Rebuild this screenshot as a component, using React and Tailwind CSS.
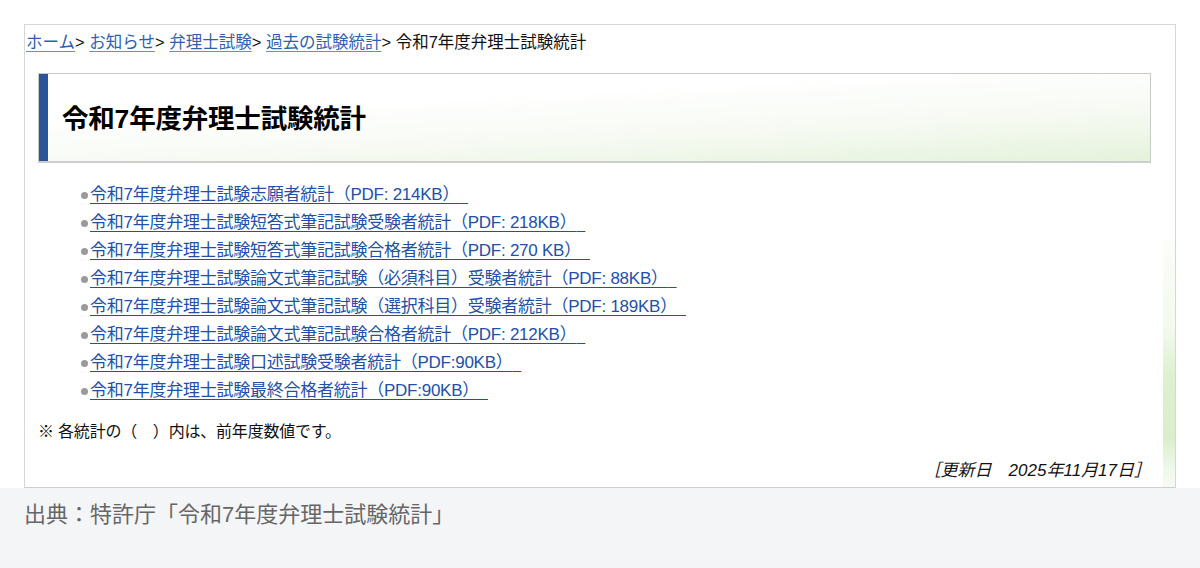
const FONT = { fontFamily: '"Liberation Sans", "Noto Sans CJK JP", sans-serif' };

const crumbs = ["ホーム", "お知らせ", "弁理士試験", "過去の試験統計"];

const files = [
  "令和7年度弁理士試験志願者統計（PDF: 214KB）",
  "令和7年度弁理士試験短答式筆記試験受験者統計（PDF: 218KB）",
  "令和7年度弁理士試験短答式筆記試験合格者統計（PDF: 270 KB）",
  "令和7年度弁理士試験論文式筆記試験（必須科目）受験者統計（PDF: 88KB）",
  "令和7年度弁理士試験論文式筆記試験（選択科目）受験者統計（PDF: 189KB）",
  "令和7年度弁理士試験論文式筆記試験合格者統計（PDF: 212KB）",
  "令和7年度弁理士試験口述試験受験者統計（PDF:90KB）",
  "令和7年度弁理士試験最終合格者統計（PDF:90KB）",
];

export default function App() {
  return (
    <div className="w-[1200px] h-[568px] bg-white flex flex-col overflow-hidden" style={FONT}>
      {/* captured page */}
      <div className="mt-6 mx-6 h-[464px] border border-[#d6d6d6] border-b-[#cfcfcf] flex text-[#111]">
        <div className="flex-1 flex flex-col pl-px">
          {/* breadcrumb */}
          <div className="pt-[5px] leading-[24px] text-[16.5px]">
            {crumbs.map((c) => (
              <span key={c}>
                <a className="text-[#2f5fae] underline underline-offset-[3px] decoration-[#6d8cc4]">{c}</a>
                <span className="text-[#111]">&gt; </span>
              </span>
            ))}
            <span>令和7年度弁理士試験統計</span>
          </div>

          {/* page heading */}
          <div className="mt-[19px] ml-3 mr-[12px] h-[90px] flex border border-[#c9c9c9] border-b-2 border-b-[#cdcdcd] bg-[linear-gradient(177deg,#ffffff_30%,#f6faf3_65%,#e5f2db_100%)]">
            <div className="w-[9px] bg-[#2a5699]" />
            <h1 className="pl-[14px] pt-[4px] flex items-center text-[26.5px] font-bold text-black tracking-[-0.2px]">
              令和7年度弁理士試験統計
            </h1>
          </div>

          {/* file list */}
          <ul className="mt-[18px] pl-[55px] flex flex-col">
            {files.map((f) => (
              <li key={f} className="h-[28px] flex items-center text-[17px] tracking-[-0.25px]">
                <span className="w-[7px] h-[7px] rounded-full bg-[#9a9a9a] mr-[2px]" />
                <a className="text-[#2350a6] underline underline-offset-[3px] decoration-[#2350a6]">
                  {f}{"\u00a0\u00a0"}
                </a>
              </li>
            ))}
          </ul>

          <p className="mt-[15px] pl-3 leading-[24px] text-[16px] tracking-[-0.2px]">
            ※ 各統計の（　）内は、前年度数値です。
          </p>

          <p className="mt-[15px] pr-[12px] text-right leading-[24px] text-[17px] italic">
            ［更新日　2025年11月17日］
          </p>
        </div>

        {/* page background edge */}
        <div className="w-[12px] flex flex-col pt-[215px]">
          <div className="flex-1 bg-[linear-gradient(180deg,#fbfdf9_0%,#f3faee_35%,#dcf1cf_55%,#d9efcb_80%,#eef8e8_92%,#f7fbf4_100%)]" />
        </div>
      </div>

      {/* source caption */}
      <div className="flex-1 bg-[#f4f5f7] px-6 pt-[12px]">
        <p className="text-[22px] leading-[30px] text-[#666]">出典：特許庁「令和7年度弁理士試験統計」</p>
      </div>
    </div>
  );
}
